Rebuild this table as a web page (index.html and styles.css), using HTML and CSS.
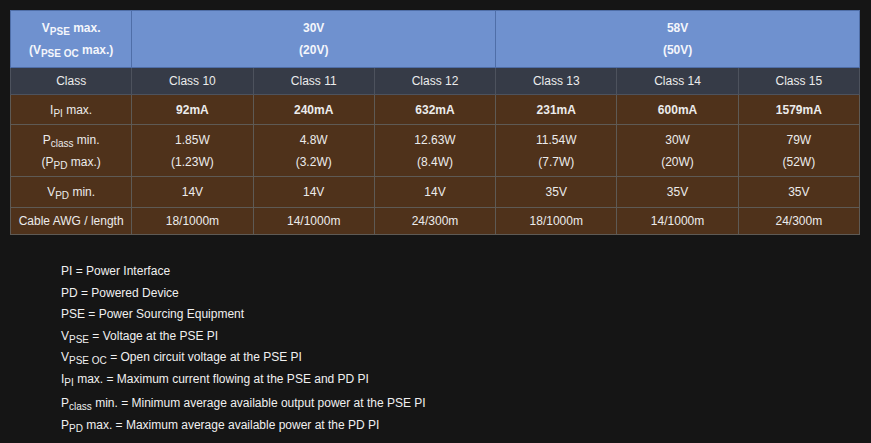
FILE: index.html
```html
<!DOCTYPE html>
<html>
<head>
<meta charset="utf-8">
<link rel="stylesheet" href="styles.css">
</head>
<body>
<div class="page">
  <table class="poe">
    <colgroup>
      <col><col><col><col><col><col><col>
    </colgroup>
    <tr class="r-volt">
      <th>V<sub>PSE</sub> max.<br>(V<sub>PSE OC</sub> max.)</th>
      <th colspan="3">30V<br>(20V)</th>
      <th colspan="3">58V<br>(50V)</th>
    </tr>
    <tr class="r-class">
      <td>Class</td><td>Class 10</td><td>Class 11</td><td>Class 12</td><td>Class 13</td><td>Class 14</td><td>Class 15</td>
    </tr>
    <tr class="r-ipi">
      <td class="lbl">I<sub>PI</sub> max.</td><td>92mA</td><td>240mA</td><td>632mA</td><td>231mA</td><td>600mA</td><td>1579mA</td>
    </tr>
    <tr class="r-pclass">
      <td>P<sub>class</sub> min.<br>(P<sub>PD</sub> max.)</td><td>1.85W<br>(1.23W)</td><td>4.8W<br>(3.2W)</td><td>12.63W<br>(8.4W)</td><td>11.54W<br>(7.7W)</td><td>30W<br>(20W)</td><td>79W<br>(52W)</td>
    </tr>
    <tr class="r-vpd">
      <td>V<sub>PD</sub> min.</td><td>14V</td><td>14V</td><td>14V</td><td>35V</td><td>35V</td><td>35V</td>
    </tr>
    <tr class="r-cable">
      <td>Cable AWG / length</td><td>18/1000m</td><td>14/1000m</td><td>24/300m</td><td>18/1000m</td><td>14/1000m</td><td>24/300m</td>
    </tr>
  </table>

  <div class="legend">
    <div class="line">PI = Power Interface</div>
    <div class="line">PD = Powered Device</div>
    <div class="line">PSE = Power Sourcing Equipment</div>
    <div class="line">V<sub>PSE</sub> = Voltage at the PSE PI</div>
    <div class="line">V<sub>PSE OC</sub> = Open circuit voltage at the PSE PI</div>
    <div class="line">I<sub>PI</sub> max. = Maximum current flowing at the PSE and PD PI</div>
    <div class="line tall">P<sub>class</sub> min. = Minimum average available output power at the PSE PI</div>
    <div class="line">P<sub>PD</sub> max. = Maximum average available power at the PD PI</div>
  </div>
</div>
</body>
</html>
```

FILE: styles.css
```css
html, body {
  margin: 0;
  padding: 0;
  background: #151515;
}

.page {
  width: 871px;
  height: 443px;
  box-sizing: border-box;
  padding: 10px 0 0 10px;
  font-family: "Liberation Sans", Arial, sans-serif;
  color: #ececec;
  overflow: hidden;
}

.poe {
  width: 850px;
  table-layout: fixed;
  border-collapse: collapse;
  font-size: 12px;
  border: 1px solid #6a707c;
}

.poe th,
.poe td {
  border: 1px solid #5e5a55;
  text-align: center;
  vertical-align: middle;
  padding: 0 4px;
  line-height: 22px;
}

.poe sub {
  font-size: 10px;
  line-height: 0;
  vertical-align: -3px;
}

.r-volt th {
  background: #6f91cf;
  color: #f4f6fb;
  font-weight: bold;
  height: 56px;
  border-color: #4f6ea8;
}

.r-class td {
  background: #363b47;
  height: 26px;
  border-color: #4d525d;
}

.r-ipi td,
.r-pclass td,
.r-vpd td,
.r-cable td {
  background: #4f321b;
}

.r-ipi td {
  height: 29px;
  font-weight: bold;
}

.r-ipi td.lbl {
  font-weight: normal;
}

.r-pclass td {
  height: 51px;
}

.r-vpd td {
  height: 30px;
}

.r-cable td {
  height: 26px;
}

.legend {
  margin: 26px 0 0 51px;
  font-size: 12px;
  color: #f0f0f0;
}

.legend .line {
  line-height: 21.5px;
}

.legend .line.tall {
  margin-top: 3px;
}

.legend sub {
  font-size: 10px;
  line-height: 0;
  vertical-align: -3px;
}
```
